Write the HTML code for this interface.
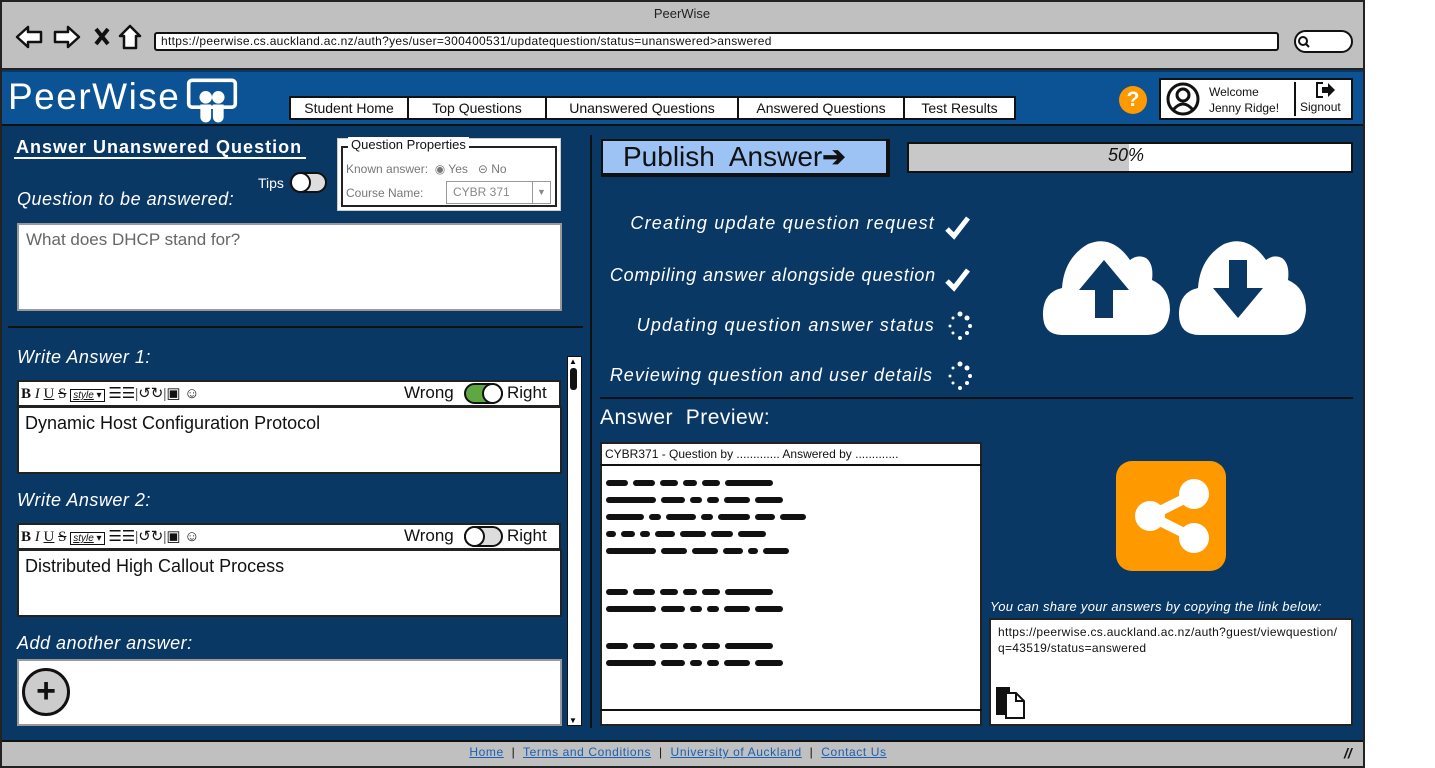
<!DOCTYPE html>
<html><head><meta charset="utf-8"><style>
*{box-sizing:border-box;margin:0;padding:0}
body{width:1435px;height:768px;background:#fff;position:relative;overflow:hidden;font-family:"Liberation Sans",sans-serif}
.a{position:absolute}
.w{color:#fff}
.it{font-style:italic}
.box{position:absolute;background:#fff;border:2px solid #222}
.tab{position:absolute;top:96px;height:24px;background:#fff;border:2px solid #111;font-size:14px;text-align:center;line-height:20px;color:#111}
.tb{position:absolute;left:17px;width:544px;height:27px;background:#fff;border:2px solid #222;font-size:14px}
.scr span{display:inline-block;height:6px;background:#111;border-radius:3px;margin-right:5px;vertical-align:middle}
.scr div{height:17px;line-height:17px}
.st{position:absolute;right:500px;font-size:18px;font-style:italic;color:#fff;text-align:right;white-space:nowrap;letter-spacing:0.6px}
</style></head><body>
<div class="a" style="left:0;top:0;width:1365px;height:768px;border:2px solid #222;background:#0a3864"></div>
<div class="a" style="left:2px;top:2px;width:1361px;height:68px;background:#c0c0c0;border-bottom:2px solid #222"></div>
<div class="a" style="left:0;top:6px;width:1364px;text-align:center;font-size:13px;color:#222">PeerWise</div>
<svg class="a" style="left:14px;top:22px" width="130" height="30" viewBox="0 0 130 30">
<path d="M3 15 L14 5 L14 10 L27 10 L27 20 L14 20 L14 25 Z" fill="#fff" stroke="#111" stroke-width="2.5" stroke-linejoin="round"/>
<path d="M65 15 L54 5 L54 10 L41 10 L41 20 L54 20 L54 25 Z" fill="#fff" stroke="#111" stroke-width="2.5" stroke-linejoin="round"/>
<path d="M82 7 L94 22 M94 7 L82 22" stroke="#111" stroke-width="4"/>
<path d="M106 14 L116 4 L126 14 L122 14 L122 26 L110 26 L110 14 Z" fill="#fff" stroke="#111" stroke-width="2.5" stroke-linejoin="round"/>
</svg>
<div class="a" style="left:154px;top:32px;width:1125px;height:19px;background:#fff;border:2px solid #111;border-radius:3px;font-size:12px;line-height:15px;padding-left:5px;color:#111;letter-spacing:0.3px">https://peerwise.cs.auckland.ac.nz/auth?yes/user=300400531/updatequestion/status=unanswered&gt;answered</div>
<div class="a" style="left:1294px;top:30px;width:59px;height:23px;background:#fff;border:2px solid #111;border-radius:12px"></div>
<svg class="a" style="left:1297px;top:35px" width="14" height="14"><circle cx="6" cy="6" r="4" fill="none" stroke="#111" stroke-width="2"/><path d="M9 9 L12 12" stroke="#111" stroke-width="2"/></svg>
<div class="a" style="left:2px;top:72px;width:1361px;height:54px;background:#0b5394;border-bottom:2px solid #111"></div>
<div class="a w" style="left:8px;top:76px;font-size:37px;letter-spacing:1.5px">PeerWise</div>
<svg class="a" style="left:186px;top:75px" width="52" height="50" viewBox="0 0 58 50">
<rect x="3" y="3" width="52" height="30" rx="4" fill="none" stroke="#fff" stroke-width="4"/>
<circle cx="22" cy="22" r="7" fill="#fff"/><circle cx="36" cy="22" r="7" fill="#fff"/>
<path d="M16 30 h12 v14 a6 6 0 0 1 -12 0z M30 30 h12 v14 a6 6 0 0 1 -12 0z" fill="#fff"/>
</svg>
<div class="tab" style="left:289px;width:120px">Student Home</div>
<div class="tab" style="left:407px;width:140px">Top Questions</div>
<div class="tab" style="left:545px;width:194px">Unanswered Questions</div>
<div class="tab" style="left:737px;width:168px">Answered Questions</div>
<div class="tab" style="left:903px;width:113px">Test Results</div>
<div class="a" style="left:1119px;top:86px;width:28px;height:28px;border-radius:50%;background:#f90;color:#fff;font-weight:bold;font-size:21px;text-align:center;line-height:28px">?</div>
<div class="a" style="left:1159px;top:78px;width:194px;height:42px;background:#fff;border:2px solid #111"></div>
<svg class="a" style="left:1166px;top:82px" width="34" height="34"><circle cx="17" cy="17" r="15" fill="none" stroke="#111" stroke-width="3"/><circle cx="17" cy="13" r="6" fill="none" stroke="#111" stroke-width="3"/><path d="M7 28 Q17 16 27 28" fill="none" stroke="#111" stroke-width="3"/></svg>
<div class="a" style="left:1209px;top:84px;font-size:12px;line-height:16px;color:#111">Welcome<br>Jenny Ridge!</div>
<div class="a" style="left:1294px;top:82px;width:2px;height:34px;background:#111"></div>
<svg class="a" style="left:1315px;top:81px" width="22" height="18"><path d="M8 2 H2 V16 H8" fill="none" stroke="#111" stroke-width="2"/><path d="M7 6 H13 V2 L20 9 L13 16 V12 H7Z" fill="#111"/></svg>
<div class="a" style="left:1300px;top:100px;font-size:12px;color:#111">Signout</div>
<div class="a w" style="left:16px;top:137px;font-size:18px;font-weight:bold;letter-spacing:1px">Answer Unanswered Question</div>
<div class="a" style="left:14px;top:157px;width:292px;height:2px;background:#fff"></div>
<div class="a" style="left:337px;top:138px;width:224px;height:73px;background:#fff;border:1px solid #ccc"></div>
<div class="a" style="left:341px;top:146px;width:216px;height:61px;border:2px solid #222"></div>
<div class="a" style="left:348px;top:137px;background:#fff;padding:0 3px;font-size:13px;color:#111">Question Properties</div>
<div class="a" style="left:346px;top:162px;font-size:12px;color:#777">Known answer: &nbsp;◉ Yes &nbsp;&nbsp;⊝ No</div>
<div class="a" style="left:346px;top:186px;font-size:12px;color:#777">Course Name:</div>
<div class="a" style="left:446px;top:181px;width:105px;height:23px;border:1px solid #999;font-size:12px;color:#888;line-height:21px;padding-left:6px">CYBR 371<span style="position:absolute;right:0;top:0;width:18px;height:21px;border-left:1px solid #999;text-align:center;font-size:9px">▼</span></div>
<div class="a w" style="left:258px;top:175px;font-size:14px">Tips</div>
<div class="a" style="left:290px;top:172px;width:37px;height:21px;border:2px solid #111;border-radius:11px;background:#ddd"></div>
<div class="a" style="left:290px;top:172px;width:21px;height:21px;border:2px solid #111;border-radius:50%;background:#fff"></div>
<div class="a w it" style="left:17px;top:189px;font-size:18px;letter-spacing:0.5px">Question to be answered:</div>
<div class="box" style="left:17px;top:223px;width:545px;height:88px;border-color:#999;font-size:17px;color:#666;padding:5px 7px">What does DHCP stand for?</div>
<div class="a" style="left:8px;top:326px;width:575px;height:2px;background:#111"></div>
<div class="a w it" style="left:17px;top:347px;font-size:18px;letter-spacing:0.5px">Write Answer 1:</div>
<div class="tb" style="top:380px"></div>
<div class="a" style="left:21px;top:384px;font-size:15px;color:#111;font-family:'Liberation Serif',serif"><b>B</b> <i>I</i> <u>U</u> <s>S</s> <span style="font-size:10px;border:1px solid #111;padding:0 2px;font-family:'Liberation Sans'"><i><u>style</u></i> ▾</span> ☰☰|↺↻|▣ ☺</div>
<div class="a" style="left:404px;top:383px;font-size:17px;color:#111">Wrong</div>
<div class="a" style="left:464px;top:383px;width:39px;height:21px;border:2px solid #111;border-radius:11px;background:#5ea743"></div>
<div class="a" style="left:482px;top:383px;width:21px;height:21px;border:2px solid #111;border-radius:50%;background:#fff"></div>
<div class="a" style="left:507px;top:383px;font-size:17px;color:#111">Right</div>
<div class="box" style="left:17px;top:406px;width:545px;height:68px;font-size:18px;color:#111;padding:5px 6px">Dynamic Host Configuration Protocol</div>
<div class="a w it" style="left:17px;top:490px;font-size:18px;letter-spacing:0.5px">Write Answer 2:</div>
<div class="tb" style="top:523px"></div>
<div class="a" style="left:21px;top:527px;font-size:15px;color:#111;font-family:'Liberation Serif',serif"><b>B</b> <i>I</i> <u>U</u> <s>S</s> <span style="font-size:10px;border:1px solid #111;padding:0 2px;font-family:'Liberation Sans'"><i><u>style</u></i> ▾</span> ☰☰|↺↻|▣ ☺</div>
<div class="a" style="left:404px;top:526px;font-size:17px;color:#111">Wrong</div>
<div class="a" style="left:464px;top:526px;width:39px;height:21px;border:2px solid #111;border-radius:11px;background:#ddd"></div>
<div class="a" style="left:464px;top:526px;width:21px;height:21px;border:2px solid #111;border-radius:50%;background:#fff"></div>
<div class="a" style="left:507px;top:526px;font-size:17px;color:#111">Right</div>
<div class="box" style="left:17px;top:549px;width:545px;height:68px;font-size:18px;color:#111;padding:5px 6px">Distributed High Callout Process</div>
<div class="a w it" style="left:17px;top:633px;font-size:18px;letter-spacing:0.5px">Add another answer:</div>
<div class="box" style="left:17px;top:659px;width:545px;height:67px;border-color:#999"></div>
<div class="a" style="left:22px;top:668px;width:48px;height:48px;border:3px solid #111;border-radius:50%;background:#ccc;text-align:center;line-height:40px;font-size:34px;font-weight:bold;color:#111">+</div>
<div class="a" style="left:567px;top:356px;width:15px;height:370px;background:#fff;border:1px solid #111"></div>
<div class="a" style="left:570px;top:368px;width:7px;height:22px;background:#111;border-radius:3px"></div>
<div class="a" style="left:569px;top:716px;font-size:8px">▼</div>
<div class="a" style="left:569px;top:357px;font-size:8px">▲</div>
<div class="a" style="left:590px;top:135px;width:2px;height:593px;background:#111"></div>
<div class="a" style="left:601px;top:139px;width:289px;height:38px;background:#9dc3f5;border:2px solid #111;border-right-width:4px;border-bottom-width:4px;font-size:28px;line-height:32px;padding-left:20px;color:#111">Publish&nbsp; Answer<b>➔</b></div>
<div class="a" style="left:907px;top:142px;width:446px;height:31px;background:linear-gradient(90deg,#c8c8c8 0,#c8c8c8 220px,#fff 220px);border:2px solid #111"></div>
<div class="a it" style="left:1108px;top:145px;font-size:18px;color:#111">50%</div>
<div class="st" style="top:213px;right:500px;letter-spacing:1.2px">Creating update question request</div>
<div class="st" style="top:265px;right:499px;letter-spacing:0.8px">Compiling answer alongside question</div>
<div class="st" style="top:315px;right:500px;letter-spacing:1.2px">Updating question answer status</div>
<div class="st" style="top:365px;right:502px;letter-spacing:1px">Reviewing question and user details</div>
<svg class="a" style="left:944px;top:212px" width="32" height="180">
<path d="M3 17 L10 24 L24 6" fill="none" stroke="#fff" stroke-width="5"/>
<path d="M3 69 L10 76 L24 58" fill="none" stroke="#fff" stroke-width="5"/>
<g fill="#fff"><circle cx="16" cy="102" r="2.5"/><circle cx="23" cy="106" r="2.5"/><circle cx="26" cy="114" r="2"/><circle cx="23" cy="121" r="2"/><circle cx="16" cy="126" r="2"/><circle cx="9" cy="121" r="1.5"/><circle cx="6" cy="114" r="1.5"/><circle cx="9" cy="106" r="1.5"/>
<circle cx="16" cy="152" r="2.5"/><circle cx="23" cy="156" r="2.5"/><circle cx="26" cy="164" r="2"/><circle cx="23" cy="171" r="2"/><circle cx="16" cy="176" r="2"/><circle cx="9" cy="171" r="1.5"/><circle cx="6" cy="164" r="1.5"/><circle cx="9" cy="156" r="1.5"/></g>
</svg>
<svg class="a" style="left:1042px;top:240px" width="266" height="96" viewBox="0 0 266 96">
<g fill="#fff">
<path d="M20 95 Q0 95 1 72 Q2 52 20 48 Q22 18 46 4 Q70 -6 88 20 Q96 14 104 18 Q112 24 110 40 Q128 48 128 70 Q126 95 104 95Z"/>
<path d="M158 95 Q136 95 137 72 Q138 52 156 48 Q158 18 182 4 Q206 -6 224 20 Q232 14 240 18 Q248 24 246 40 Q264 48 264 70 Q262 95 240 95Z"/>
</g>
<path d="M62 20 L37 50 L53 50 L53 78 L71 78 L71 50 L87 50Z" fill="#0a3864"/>
<path d="M196 78 L171 48 L187 48 L187 20 L205 20 L205 48 L221 48Z" fill="#0a3864"/>
</svg>
<div class="a" style="left:600px;top:397px;width:753px;height:2px;background:#111"></div>
<div class="a w" style="left:600px;top:406px;font-size:21px;letter-spacing:0.5px">Answer&nbsp; Preview:</div>
<div class="box" style="left:600px;top:442px;width:382px;height:284px"></div>
<div class="a" style="left:600px;top:464px;width:382px;height:2px;background:#111"></div>
<div class="a" style="left:600px;top:709px;width:382px;height:2px;background:#111"></div>
<div class="a" style="left:605px;top:447px;font-size:12px;color:#111">CYBR371 - Question by ............. Answered by .............</div>
<div class="a scr" style="left:606px;top:474px">
<div><span style="width:22px"></span><span style="width:22px"></span><span style="width:18px"></span><span style="width:14px"></span><span style="width:18px"></span><span style="width:48px"></span></div>
<div><span style="width:50px"></span><span style="width:24px"></span><span style="width:12px"></span><span style="width:12px"></span><span style="width:26px"></span><span style="width:28px"></span></div>
<div><span style="width:38px"></span><span style="width:12px"></span><span style="width:30px"></span><span style="width:12px"></span><span style="width:32px"></span><span style="width:20px"></span><span style="width:26px"></span></div>
<div><span style="width:10px"></span><span style="width:14px"></span><span style="width:10px"></span><span style="width:20px"></span><span style="width:26px"></span><span style="width:22px"></span><span style="width:28px"></span></div>
<div><span style="width:50px"></span><span style="width:26px"></span><span style="width:26px"></span><span style="width:20px"></span><span style="width:10px"></span><span style="width:26px"></span></div>
<div style="height:24px"></div>
<div><span style="width:22px"></span><span style="width:22px"></span><span style="width:18px"></span><span style="width:14px"></span><span style="width:18px"></span><span style="width:48px"></span></div>
<div><span style="width:50px"></span><span style="width:24px"></span><span style="width:12px"></span><span style="width:12px"></span><span style="width:26px"></span><span style="width:28px"></span></div>
<div style="height:20px"></div>
<div><span style="width:22px"></span><span style="width:22px"></span><span style="width:18px"></span><span style="width:14px"></span><span style="width:18px"></span><span style="width:48px"></span></div>
<div><span style="width:50px"></span><span style="width:24px"></span><span style="width:12px"></span><span style="width:12px"></span><span style="width:26px"></span><span style="width:28px"></span></div>
</div>
<div class="a" style="left:1116px;top:461px;width:110px;height:110px;background:#f90;border-radius:16px"></div>
<svg class="a" style="left:1116px;top:461px" width="110" height="110"><g fill="#fff"><circle cx="78" cy="33" r="15"/><circle cx="78" cy="77" r="15"/><circle cx="34" cy="55" r="15"/></g><path d="M34 55 L78 33 M34 55 L78 77" stroke="#fff" stroke-width="10"/></svg>
<div class="a w it" style="left:990px;top:599px;font-size:13px;letter-spacing:0.3px">You can share your answers by copying the link below:</div>
<div class="box" style="left:989px;top:618px;width:364px;height:108px;font-size:12px;line-height:16px;color:#111;padding:4px 7px;word-break:break-all;letter-spacing:0.3px">https://peerwise.cs.auckland.ac.nz/auth?guest/viewquestion/q=43519/status=answered</div>
<svg class="a" style="left:994px;top:685px" width="34" height="34"><rect x="2" y="2" width="14" height="28" fill="#111"/><path d="M12 8 H22 L30 16 V33 H12Z" fill="#fff" stroke="#111" stroke-width="2"/><path d="M22 8 V16 H30" fill="none" stroke="#111" stroke-width="2"/></svg>
<div class="a" style="left:2px;top:740px;width:1361px;height:26px;background:#c0c0c0;border-top:2px solid #111"></div>
<div class="a" style="left:0;top:744px;width:1356px;text-align:center;font-size:12px;color:#1a5fb4;line-height:16px;letter-spacing:0.6px">
<u>Home</u> <span style="color:#111">&nbsp;|&nbsp;</span> <u>Terms and Conditions</u> <span style="color:#111">&nbsp;|&nbsp;</span> <u>University of Auckland</u> <span style="color:#111">&nbsp;|&nbsp;</span> <u>Contact Us</u></div>
<div class="a" style="left:1344px;top:745px;font-size:14px;font-weight:bold;font-style:italic;color:#111">//</div>
</body></html>
